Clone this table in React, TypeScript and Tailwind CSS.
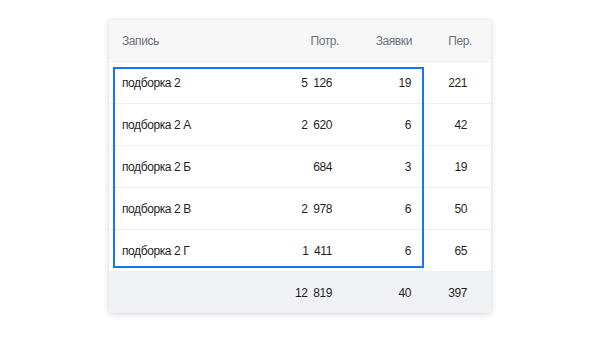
import React from 'react';

type Row = { name: string; spend: string; leads: string; per: string };

const rows: Row[] = [
  { name: 'подборка 2', spend: '5\u2002126', leads: '19', per: '221' },
  { name: 'подборка 2 А', spend: '2\u2002620', leads: '6', per: '42' },
  { name: 'подборка 2 Б', spend: '684', leads: '3', per: '19' },
  { name: 'подборка 2 В', spend: '2\u2002978', leads: '6', per: '50' },
  { name: 'подборка 2 Г', spend: '1\u2002411', leads: '6', per: '65' },
];

const font = { fontFamily: '"Liberation Sans", Arial, sans-serif' };

export default function App() {
  return (
    <div className="flex h-[337px] w-[600px] items-start justify-center bg-white pt-[20px]" style={font}>
      <div className="relative w-[382px] overflow-hidden bg-white text-[12px] tracking-[-0.4px] shadow-[0_1px_6px_rgba(0,0,0,0.18)]">
        <div className="flex h-[42px] items-center border-b border-[#ececec] bg-[#f7f7f7] text-[#6b7280]">
          <div className="flex-1 pl-[13px]">Запись</div>
          <div className="w-[59px] text-right">Потр.</div>
          <div className="w-[73px] text-right">Заявки</div>
          <div className="w-[79px] pr-[19px] text-right">Пер.</div>
        </div>

        {rows.map((r) => (
          <div key={r.name} className="flex h-[42px] items-center border-b border-[#efefef] text-[#1f1f1f]">
            <div className="flex-1 pl-[13px]">{r.name}</div>
            <div className="w-[59px] pr-[7px] text-right">{r.spend}</div>
            <div className="w-[73px] pr-[1px] text-right">{r.leads}</div>
            <div className="w-[79px] pr-[24px] text-right">{r.per}</div>
          </div>
        ))}

        <div className="flex h-[41px] items-center bg-[#f0f1f4] text-[#1f1f1f]">
          <div className="flex-1" />
          <div className="w-[59px] pr-[7px] text-right">12{'\u2002'}819</div>
          <div className="w-[73px] pr-[1px] text-right">40</div>
          <div className="w-[79px] pr-[24px] text-right">397</div>
        </div>

        {/* selection frame */}
        <div className="pointer-events-none absolute left-[4px] top-[47px] h-[201px] w-[311px] border-2 border-[#1a73f0]" />
      </div>
    </div>
  );
}
